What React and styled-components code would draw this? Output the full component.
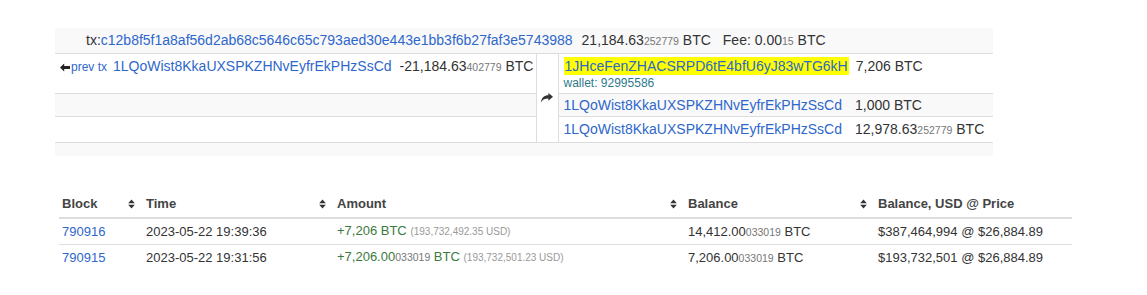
import React from 'react';
import styled, { createGlobalStyle } from 'styled-components';

const GlobalStyle = createGlobalStyle`
  body {
    margin: 8px;
    background: #fff;
    font-family: "Liberation Sans", Arial, sans-serif;
    font-size: 14px;
    color: #333;
  }
`;

const Page = styled.div`
  padding: 20px 0 0 47px;
`;

const TxTable = styled.table`
  width: 938px;
  border-collapse: collapse;
  table-layout: fixed;
  line-height: 20px;
`;

const HeadCell = styled.td`
  background: #f9f9f9;
  padding: 2px 5px 2px 31px;
  border-bottom: 1px solid #ddd;
  white-space: nowrap;
`;

const IoCell = styled.td`
  background: ${(p) => (p.$odd ? '#f9f9f9' : '#fff')};
  border-top: 1px solid #ddd;
  padding: ${(p) => (p.$tight ? '1px 5px' : '2px 5px')};
  vertical-align: top;
  white-space: nowrap;
`;

const ArrowCell = styled.td`
  width: 22px;
  border: 1px solid #ddd;
  border-bottom: none;
  text-align: center;
  vertical-align: middle;
  padding: 0;
  background: #fff;
  line-height: 10px;
`;

const FootCell = styled.td`
  background: #f9f9f9;
  border-top: 1px solid #ddd;
  height: 13px;
  padding: 0;
`;

const Link = styled.a`
  color: #2e67cc;
  text-decoration: none;
  margin-left: ${(p) => p.$gap || 0}px;
  background: ${(p) => (p.$mark ? '#ffff00' : 'transparent')};
  padding: ${(p) => (p.$mark ? '1px 1px' : '0')};
`;

const PrevTx = styled.a`
  color: #2e67cc;
  font-size: 12px;
  text-decoration: none;
  svg {
    vertical-align: -1px;
    margin-right: 1px;
  }
`;

const Value = styled.span`
  margin-left: ${(p) => p.$gap || 0}px;
  color: ${(p) => p.$color || '#333'};
`;

const Tail = styled.span`
  font-size: 10.5px;
  color: #777;
`;

const Wallet = styled.div`
  font-size: 12px;
  line-height: 15px;
  color: #2d7a8a;
`;

const HistoryTable = styled.table`
  margin: 34px 0 0 4px;
  width: 1013px;
  border-collapse: collapse;
  table-layout: fixed;
  line-height: 20px;
  font-size: 13px;
`;

const Th = styled.th`
  box-sizing: border-box;
  width: ${(p) => p.$w}px;
  text-align: left;
  font-weight: bold;
  color: #444;
  padding: 4px 8px 3px 3px;
  border-bottom: 2px solid #ddd;
`;

const ThInner = styled.div`
  display: flex;
  align-items: center;
  justify-content: space-between;
`;

const Td = styled.td`
  padding: 2px 3px;
  border-top: ${(p) => (p.$first ? 'none' : '1px solid #ddd')};
  white-space: nowrap;
`;

const Usd = styled.span`
  font-size: 10px;
  color: #999;
`;

const SortIcon = () => (
  <svg width="7" height="10" viewBox="0 0 8 12">
    <path d="M0 5 L4 0.5 L8 5 Z M0 7 L8 7 L4 11.5 Z" fill="#333" />
  </svg>
);

const BackArrow = () => (
  <svg width="10" height="9" viewBox="0 0 10 9">
    <path d="M0 4.5 L4.2 0.5 L4.2 3 L10 3 L10 6 L4.2 6 L4.2 8.5 Z" fill="#222" />
  </svg>
);

const ShareArrow = () => (
  <svg width="12" height="10" viewBox="0 0 12 10">
    <path d="M12 3.8 L7.4 0 L7.4 2.2 C3.2 2.2 0.6 4.4 0 9.5 C1.6 6.6 4 5.6 7.4 5.6 L7.4 7.8 Z" fill="#333" />
  </svg>
);

const addr = '1LQoWist8KkaUXSPKZHNvEyfrEkPHzSsCd';

const columns = [
  { label: 'Block', w: 84, sort: true },
  { label: 'Time', w: 191, sort: true },
  { label: 'Amount', w: 351, sort: true },
  { label: 'Balance', w: 190, sort: true },
  { label: 'Balance, USD @ Price', w: 197, sort: false },
];

const history = [
  {
    block: '790916',
    time: '2023-05-22 19:39:36',
    amount: '+7,206',
    amountTail: '',
    usd: '(193,732,492.35 USD)',
    balance: '14,412.00',
    balanceTail: '033019',
    price: '$387,464,994 @ $26,884.89',
  },
  {
    block: '790915',
    time: '2023-05-22 19:31:56',
    amount: '+7,206.00',
    amountTail: '033019',
    usd: '(193,732,501.23 USD)',
    balance: '7,206.00',
    balanceTail: '033019',
    price: '$193,732,501 @ $26,884.89',
  },
];

export default function App() {
  return (
    <Page>
      <GlobalStyle />
      <TxTable>
        <colgroup>
          <col style={{ width: 481 }} />
          <col style={{ width: 22 }} />
          <col />
        </colgroup>
        <tbody>
          <tr>
            <HeadCell colSpan={3}>
              tx:<Link href="#">c12b8f5f1a8af56d2ab68c5646c65c793aed30e443e1bb3f6b27faf3e5743988</Link>
              <Value $gap={9}>21,184.63<Tail>252779</Tail> BTC</Value>
              <Value $gap={12}>Fee: 0.00<Tail>15</Tail> BTC</Value>
            </HeadCell>
          </tr>
          <tr>
            <IoCell>
              <PrevTx href="#"><BackArrow />prev tx</PrevTx>
              <Link href="#" $gap={6}>{addr}</Link>
              <Value $gap={8}>-21,184.63<Tail>402779</Tail> BTC</Value>
            </IoCell>
            <ArrowCell rowSpan={3}><ShareArrow /></ArrowCell>
            <IoCell>
              <Link href="#" $mark>1JHceFenZHACSRPD6tE4bfU6yJ83wTG6kH</Link>
              <Value $gap={7}>7,206 BTC</Value>
              <Wallet>wallet: 92995586</Wallet>
            </IoCell>
          </tr>
          <tr>
            <IoCell $odd $tight />
            <IoCell $odd $tight>
              <Link href="#">{addr}</Link>
              <Value $gap={13}>1,000 BTC</Value>
            </IoCell>
          </tr>
          <tr>
            <IoCell />
            <IoCell>
              <Link href="#">{addr}</Link>
              <Value $gap={13}>12,978.63<Tail>252779</Tail> BTC</Value>
            </IoCell>
          </tr>
          <tr>
            <FootCell colSpan={3} />
          </tr>
        </tbody>
      </TxTable>

      <HistoryTable>
        <thead>
          <tr>
            {columns.map((c) => (
              <Th key={c.label} $w={c.w}>
                <ThInner>
                  <span>{c.label}</span>
                  {c.sort && <SortIcon />}
                </ThInner>
              </Th>
            ))}
          </tr>
        </thead>
        <tbody>
          {history.map((r, i) => (
            <tr key={r.block}>
              <Td $first={i === 0}><Link href="#">{r.block}</Link></Td>
              <Td $first={i === 0}>{r.time}</Td>
              <Td $first={i === 0}>
                <Value $color="#3c7a3d">{r.amount}<Tail>{r.amountTail}</Tail> BTC</Value> <Usd>{r.usd}</Usd>
              </Td>
              <Td $first={i === 0}>{r.balance}<Tail>{r.balanceTail}</Tail> BTC</Td>
              <Td $first={i === 0}>{r.price}</Td>
            </tr>
          ))}
        </tbody>
      </HistoryTable>
    </Page>
  );
}
